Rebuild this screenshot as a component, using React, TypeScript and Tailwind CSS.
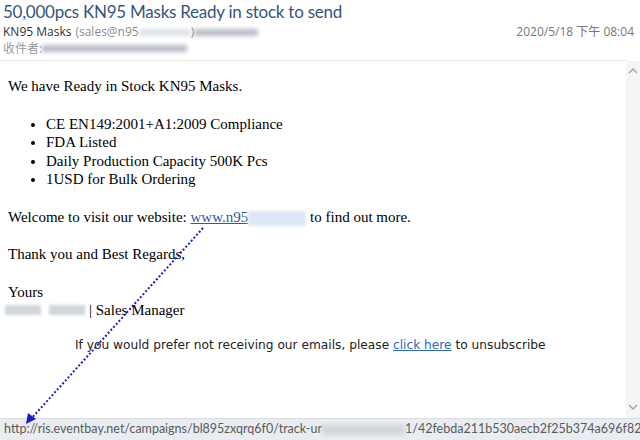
import React from 'react';

const UI_FONT = { fontFamily: '"Open Sans", "Noto Sans CJK TC", sans-serif' };
const TITLE_FONT = { fontFamily: 'Lato, "Open Sans", sans-serif' };
const SERIF = { fontFamily: '"Liberation Serif", serif' };
const VERDANA = { fontFamily: '"DejaVu Sans", sans-serif' };

const ITEMS = [
  'CE EN149:2001+A1:2009 Compliance',
  'FDA Listed',
  'Daily Production Capacity 500K Pcs',
  '1USD for Bulk Ordering',
];

function Blur({ w, color = 'bg-gray-400' }: { w: string; color?: string }) {
  return <span className={`inline-block shrink-0 h-[7px] ${w} ${color} blur-[2px] opacity-70`} />;
}

function Chevron({ up }: { up?: boolean }) {
  return (
    <svg width="10" height="6" viewBox="0 0 10 6" className="text-gray-400">
      <path d={up ? 'M1 5 L5 1 L9 5' : 'M1 1 L5 5 L9 1'} fill="none" stroke="currentColor" strokeWidth="1.3" />
    </svg>
  );
}

export default function App() {
  return (
    <div className="relative w-[640px] h-[440px] bg-white overflow-hidden flex flex-col">
      {/* header */}
      <div className="h-[61px] px-[3px] border-b border-[#e6e6e6] mr-[13px]" style={UI_FONT}>
        <div
          className="h-[24px] text-[17px] leading-[24px] tracking-[-0.25px] text-[#35557f] whitespace-nowrap"
          style={TITLE_FONT}
        >
          50,000pcs KN95 Masks Ready in stock to send
        </div>
        <div className="h-[16px] flex items-center justify-between text-[12px] leading-[16px]">
          <div className="flex items-center whitespace-nowrap">
            <span className="text-[#333]">KN95 Masks</span>
            <span className="text-[#8a8a8a] ml-[4px]">(sales@n95</span>
            <Blur w="w-[52px]" color="bg-gray-300" />
            <span className="text-[#8a8a8a]">)</span>
            <Blur w="w-[64px]" color="bg-gray-400" />
          </div>
          <span className="text-[#777] mr-[-10px]">2020/5/18 下午 08:04</span>
        </div>
        <div className="h-[17px] flex items-center text-[12px] leading-[17px] text-[#9a9a9a] whitespace-nowrap">
          <span>收件者:</span>
          <Blur w="w-[145px]" color="bg-gray-400" />
        </div>
      </div>

      {/* body + scrollbar */}
      <div className="flex flex-1 min-h-0">
        <div className="flex-1 pl-[8px] text-[15px] leading-[18.5px] text-black" style={SERIF}>
          <p className="mt-[16px]">We have Ready in Stock KN95 Masks.</p>
          <ul className="list-disc pl-[38px] my-[19px]">
            {ITEMS.map((t) => (
              <li key={t}>{t}</li>
            ))}
          </ul>
          <p>
            Welcome to visit our website:{' '}
            <span className="text-[#2b5ba6] underline">www.n95</span>
            <span className="inline-block w-[58px] h-[15px] align-middle bg-[#dce8f7] blur-[1.5px]" />{' '}
            to find out more.
          </p>
          <p className="mt-[19px]">Thank you and Best Regards,</p>
          <p className="mt-[19px]">Yours</p>
          <p className="flex items-center">
            <span className="inline-block w-[36px] h-[10px] bg-gray-300 blur-[1.5px] ml-[-3px]" />
            <span className="inline-block w-[36px] h-[10px] bg-gray-300 blur-[1.5px] ml-[8px] mr-[4px]" />| Sales
            Manager
          </p>
          <p className="mt-[17px] pl-[67px] text-[12.2px] leading-[16px] text-[#222]" style={VERDANA}>
            If you would prefer not receiving our emails, please{' '}
            <span className="text-[#2b68c0] underline">click here</span> to unsubscribe
          </p>
        </div>
        <div className="w-[14px] bg-[#f5f5f5] flex flex-col items-center justify-between pt-[7px] pb-[8px]">
          <Chevron up />
          <Chevron />
        </div>
      </div>

      {/* status bar */}
      <div
        className="h-[22px] bg-[#e9edf1] border-t border-[#d8dde3] pl-[4px] flex items-center text-[12.5px] text-[#5a5a5a] whitespace-nowrap overflow-hidden"
        style={TITLE_FONT}
      >
        <span className="shrink-0">http://ris.eventbay.net/campaigns/bl895zxqrq6f0/track-ur</span>
        <span className="inline-block shrink-0 w-[83px] h-[10px] bg-gray-300 blur-[2px]" />
        <span className="shrink-0">1/42febda211b530aecb2f25b374a696f82</span>
      </div>

      {/* dotted arrow overlay */}
      <svg className="absolute left-0 top-0 pointer-events-none" width="640" height="440">
        <line x1="203" y1="228" x2="30" y2="420" stroke="#1c1cc8" strokeWidth="2" strokeDasharray="2 2" />
        <path d="M26 424 L28 413 L36 419 Z" fill="#1c1cc8" />
      </svg>
    </div>
  );
}
